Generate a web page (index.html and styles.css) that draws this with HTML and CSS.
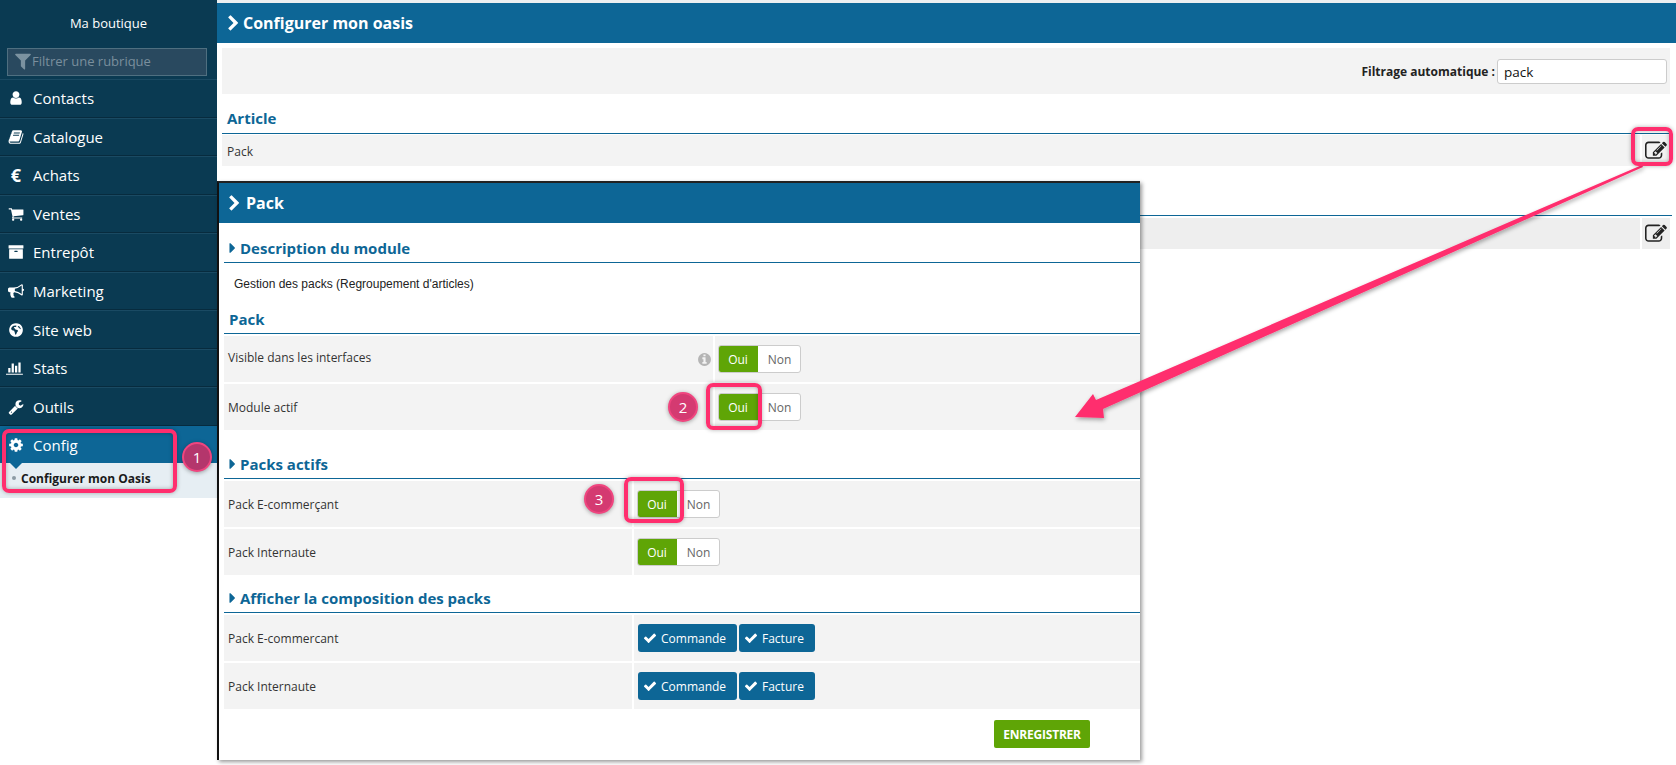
FILE: index.html
```html
<!DOCTYPE html>
<html lang="fr">
<head>
<meta charset="utf-8">
<title>Configurer mon oasis</title>
<link rel="stylesheet" href="styles.css">
</head>
<body>
<svg class="defs" width="0" height="0" aria-hidden="true">
  <symbol id="i-user" viewBox="0 0 1792 1792"><path d="M1536 1399q0 109-62.5 187t-150.5 78h-854q-88 0-150.5-78t-62.5-187q0-85 8.5-160.5t31.5-152 58.5-131 94-89 134.5-34.5q131 128 313 128t313-128q76 0 134.5 34.5t94 89 58.5 131 31.5 152 8.5 160.5zm-256-887q0 159-112.5 271.5t-271.5 112.5-271.5-112.5-112.5-271.5 112.5-271.5 271.5-112.5 271.5 112.5 112.5 271.5z"/></symbol>
  <symbol id="i-cog" viewBox="0 0 1792 1792"><path d="M1152 896q0-106-75-181t-181-75-181 75-75 181 75 181 181 75 181-75 75-181zm512-109v222q0 12-8 23t-20 13l-185 28q-19 54-39 91 35 50 107 138 10 12 10 25t-9 23q-27 37-99 108t-94 71q-12 0-26-9l-138-108q-44 23-91 38-16 136-29 186-7 28-36 28h-222q-14 0-24.5-8.5t-11.5-21.5l-28-184q-49-16-90-37l-141 107q-10 9-25 9-14 0-25-11-126-114-165-168-7-10-7-23 0-12 8-23 15-21 51-66.5t54-70.5q-27-50-41-99l-183-27q-13-2-21-12.5t-8-23.5v-222q0-12 8-23t19-13l186-28q14-46 39-92-40-57-107-138-10-12-10-24 0-10 9-23 26-36 98.5-107.5t94.5-71.5q13 0 26 10l138 107q44-23 91-38 16-136 29-186 7-28 36-28h222q14 0 24.5 8.5t11.5 21.5l28 184q49 16 90 37l142-107q9-9 24-9 13 0 25 10 129 119 165 170 7 8 7 22 0 12-8 23-15 21-51 66.5t-54 70.5q26 50 41 98l183 28q13 2 21 12.5t8 23.5z"/></symbol>
  <symbol id="i-check" viewBox="0 0 1792 1792"><path d="M1671 566q0 40-28 68l-724 724-136 136q-28 28-68 28t-68-28l-136-136-362-362q-28-28-28-68t28-68l136-136q28-28 68-28t68 28l294 295 656-657q28-28 68-28t68 28l136 136q28 28 28 68z"/></symbol>
  <symbol id="i-cart" viewBox="0 0 1792 1792"><path d="M704 1536q0 52-38 90t-90 38-90-38-38-90 38-90 90-38 90 38 38 90zm896 0q0 52-38 90t-90 38-90-38-38-90 38-90 90-38 90 38 38 90zm128-1088v512q0 24-16.5 42.5t-40.5 21.5l-1044 122q13 60 13 70 0 16-24 64h920q26 0 45 19t19 45-19 45-45 19h-1024q-26 0-45-19t-19-45q0-11 8-31.5t16-36 21.5-40 15.5-29.5l-177-823h-204q-26 0-45-19t-19-45 19-45 45-19h256q16 0 28.5 6.5t19.5 15.5 13 24.5 8 26 5.5 29.5 4.5 26h1201q26 0 45 19t19 45z"/></symbol>
  <symbol id="i-archive" viewBox="0 0 1792 1792"><path d="M1088 832q0-26-19-45t-45-19h-256q-26 0-45 19t-19 45 19 45 45 19h256q26 0 45-19t19-45zm576-192v960q0 26-19 45t-45 19h-1408q-26 0-45-19t-19-45v-960q0-26 19-45t45-19h1408q26 0 45 19t19 45zm64-448v256q0 26-19 45t-45 19h-1536q-26 0-45-19t-19-45v-256q0-26 19-45t45-19h1536q26 0 45 19t19 45z"/></symbol>
  <symbol id="i-filter" viewBox="0 0 1792 1792"><path d="M1595 295q17 41-14 70l-493 493v742q0 42-39 59-13 5-25 5-27 0-45-19l-256-256q-19-19-19-45v-486l-493-493q-31-29-14-70 17-39 59-39h1280q42 0 59 39z"/></symbol>
  <symbol id="i-horn" viewBox="0 0 1792 1792"><path d="M1664 640q53 0 90.5 37.5t37.5 90.5-37.5 90.5-90.5 37.5v384q0 52-38 90t-90 38q-417-347-812-380-58 19-91 66t-31 100.5 40 92.5q-20 33-23 65.5t6 58 33.5 55 48 50 61.5 50.5q-29 58-111.5 83t-168.5 11.5-132-55.5q-7-23-29.5-87.5t-32-94.5-23-89-15-101 3.5-98.5 22-110.5h-122q-66 0-113-47t-47-113v-192q0-66 47-113t113-47h480q435 0 896-384 52 0 90 38t38 90v384zm-128 604v-954q-394 302-768 343v270q377 42 768 341z"/></symbol>
  <symbol id="i-chart" viewBox="0 0 2048 1792"><path d="M512 896v512h-256v-512h256zm384-512v1024h-256v-1024h256zm1024 1152v128h-2048v-1280h128v1152h1920zm-640-896v768h-256v-768h256zm384-384v1152h-256v-1152h256z"/></symbol>
  <symbol id="i-wrench" viewBox="0 0 1792 1792"><path d="M448 1472q0-26-19-45t-45-19-45 19-19 45 19 45 45 19 45-19 19-45zm644-420l-682 682q-37 37-90 37-52 0-91-37l-106-108q-38-36-38-90 0-53 38-91l681-681q39 98 114.5 173.5t173.5 114.5zm634-435q0 39-23 106-47 134-164.5 217.5t-258.5 83.5q-185 0-316.5-131.5t-131.5-316.5 131.5-316.5 316.5-131.5q58 0 121.5 16.5t107.5 46.5q16 11 16 28t-16 28l-293 169v224l193 107q5-3 79-48.5t135.5-81 70.5-35.5q15 0 23.5 10t8.5 25z"/></symbol>
  <symbol id="i-info" viewBox="0 0 1792 1792"><path d="M1152 1376v-160q0-14-9-23t-23-9h-96v-512q0-14-9-23t-23-9h-320q-14 0-23 9t-9 23v160q0 14 9 23t23 9h96v320h-96q-14 0-23 9t-9 23v160q0 14 9 23t23 9h448q14 0 23-9t9-23zm-128-896v-160q0-14-9-23t-23-9h-192q-14 0-23 9t-9 23v160q0 14 9 23t23 9h192q14 0 23-9t9-23zm640 416q0 209-103 385.5t-279.5 279.5-385.5 103-385.5-103-279.5-279.5-103-385.5 103-385.5 279.5-279.5 385.5-103 385.5 103 279.5 279.5 103 385.5z"/></symbol>
  <symbol id="i-edit" viewBox="0 0 1792 1792"><path d="M888 1184l116-116-152-152-116 116v56h96v96h56zm440-720q-16-16-33 1l-350 350q-17 17-1 33t33-1l350-350q17-17 1-33zm80 594v190q0 119-84.5 203.5t-203.5 84.5h-832q-119 0-203.5-84.5t-84.5-203.5v-832q0-119 84.5-203.5t203.5-84.5h832q63 0 117 25 15 7 18 23 3 17-9 29l-49 49q-14 14-32 8-23-6-45-6h-832q-66 0-113 47t-47 113v832q0 66 47 113t113 47h832q66 0 113-47t47-113v-126q0-13 9-22l64-64q15-15 35-8t20 29zm-96-738l288 288-672 672h-288v-288zm444 132l-92 92-288-288 92-92q28-28 68-28t68 28l152 152q28 28 28 68t-28 68z"/></symbol>
  <symbol id="i-book" viewBox="0 0 1792 1792"><path d="M1703 478q40 57 18 129l-275 906q-19 64-76.5 107.5t-122.5 43.5h-923q-77 0-148.5-53.5t-99.5-131.5q-24-67-2-127 0-4 3-27t4-37q1-8-3-21.5t-3-19.5q2-11 8-21t16.5-23.5 16.5-23.5q23-38 45-91.5t30-91.5q3-10 .5-30t-.5-28q3-11 17-28t17-23q21-36 42-92t25-90q1-9-2.5-32t.5-28q4-13 22-30.5t22-22.5q19-26 42.5-84.5t27.5-96.5q1-8-3-25.5t-2-26.5q2-8 9-18t18-23 17-21q8-12 16.5-30.5t15-35 16-36 19.5-32 26.5-23.5 36-11.5 47.5 5.5l-1 3q38-9 51-9h761q74 0 114 56t18 130l-274 906q-36 119-71.5 153.5t-128.5 34.5h-869q-27 0-38 15-11 16-1 43 24 70 144 70h923q29 0 56-15.5t35-41.5l300-987q7-22 5-57 38 15 59 43zm-1064 2q-4 13 2 22.5t20 9.5h608q13 0 25.5-9.5t16.5-22.5l21-64q4-13-2-22.5t-20-9.5h-608q-13 0-25.5 9.5t-16.5 22.5zm-83 256q-4 13 2 22.5t20 9.5h608q13 0 25.5-9.5t16.5-22.5l21-64q4-13-2-22.5t-20-9.5h-608q-13 0-25.5 9.5t-16.5 22.5z"/></symbol>
  <symbol id="i-globe" viewBox="0 0 1792 1792"><path fill-rule="evenodd" d="M896 128q209 0 385.5 103t279.5 279.5 103 385.5-103 385.5-279.5 279.5-385.5 103-385.5-103-279.5-279.5-103-385.5 103-385.5 279.5-279.5 385.5-103zM620 420l-190 150-90 220 130 130 210 60 70 180 60 260 110-60 90-210 120-130-70-130-230-60-80-120-110-10 60-130 170-20 90-100-60-60zM1180 440l-90 70 30 90 130 30 60 130 130 60-30-130-110-170z"/></symbol>
  <symbol id="i-chevron" viewBox="0 0 1792 1792"><path d="M1363 877l-742 742q-19 19-45 19t-45-19l-166-166q-19-19-19-45t19-45l531-531-531-531q-19-19-19-45t19-45l166-166q19-19 45-19t45 19l742 742q19 19 19 45t-19 45z"/></symbol>
  <symbol id="i-caret" viewBox="0 0 1792 1792"><path d="M1152 896q0 26-19 45l-448 448q-19 19-45 19t-45-19-19-45v-896q0-26 19-45t45-19 45 19l448 448q19 19 19 45z"/></symbol>
</svg>

<div class="app">
  <aside class="sidebar">
    <div class="shop">Ma boutique</div>
    <div class="search">
      <svg class="search-icon"><use href="#i-filter"/></svg>
      <span class="search-text">Filtrer une rubrique</span>
    </div>
    <nav class="menu">
      <div class="item"><svg class="ico"><use href="#i-user"/></svg><span>Contacts</span></div>
      <div class="item"><svg class="ico"><use href="#i-book"/></svg><span>Catalogue</span></div>
      <div class="item"><span class="ico euro">€</span><span>Achats</span></div>
      <div class="item"><svg class="ico"><use href="#i-cart"/></svg><span>Ventes</span></div>
      <div class="item"><svg class="ico"><use href="#i-archive"/></svg><span>Entrepôt</span></div>
      <div class="item"><svg class="ico"><use href="#i-horn"/></svg><span>Marketing</span></div>
      <div class="item"><svg class="ico"><use href="#i-globe"/></svg><span>Site web</span></div>
      <div class="item"><svg class="ico wide-ico"><use href="#i-chart"/></svg><span>Stats</span></div>
      <div class="item"><svg class="ico"><use href="#i-wrench"/></svg><span>Outils</span></div>
      <div class="item active"><svg class="ico"><use href="#i-cog"/></svg><span>Config</span></div>
    </nav>
    <div class="submenu"><i class="bullet"></i><span>Configurer mon Oasis</span></div>
  </aside>

  <main class="main">
    <header class="bar"><svg class="chev"><use href="#i-chevron"/></svg><span>Configurer mon oasis</span></header>
    <div class="filter">
      <label class="filter-label">Filtrage automatique :</label>
      <div class="filter-input">pack</div>
    </div>
    <h2 class="section">Article</h2>
    <div class="row-main">
      <div class="cell grow">Pack</div>
      <div class="cell edit"><svg class="edit-ico"><use href="#i-edit"/></svg></div>
    </div>
    <h2 class="section second">&nbsp;</h2>
    <div class="row-main alt">
      <div class="cell grow">&nbsp;</div>
      <div class="cell edit"><svg class="edit-ico"><use href="#i-edit"/></svg></div>
    </div>
  </main>
</div>

<section class="modal">
  <header class="bar modal-bar"><svg class="chev"><use href="#i-chevron"/></svg><span>Pack</span></header>
  <div class="modal-body">
    <h3 class="mh first"><svg class="caret"><use href="#i-caret"/></svg>Description du module</h3>
    <p class="desc">Gestion des packs (Regroupement d'articles)</p>
    <h3 class="mh plain">Pack</h3>
    <div class="rows wide">
      <div class="lab up"><span>Visible dans les interfaces</span><svg class="info"><use href="#i-info"/></svg></div>
      <div class="val"><div class="toggle"><b>Oui</b><em>Non</em></div></div>
      <div class="lab"><span>Module actif</span></div>
      <div class="val"><div class="toggle"><b>Oui</b><em>Non</em></div></div>
    </div>
    <h3 class="mh packs"><svg class="caret"><use href="#i-caret"/></svg>Packs actifs</h3>
    <div class="rows">
      <div class="lab"><span>Pack E-commerçant</span></div>
      <div class="val"><div class="toggle"><b>Oui</b><em>Non</em></div></div>
      <div class="lab"><span>Pack Internaute</span></div>
      <div class="val"><div class="toggle"><b>Oui</b><em>Non</em></div></div>
    </div>
    <h3 class="mh comp"><svg class="caret"><use href="#i-caret"/></svg>Afficher la composition des packs</h3>
    <div class="rows">
      <div class="lab"><span>Pack E-commercant</span></div>
      <div class="val btns"><span class="btn cmd"><svg class="tick"><use href="#i-check"/></svg>Commande</span><span class="btn fac"><svg class="tick"><use href="#i-check"/></svg>Facture</span></div>
      <div class="lab"><span>Pack Internaute</span></div>
      <div class="val btns"><span class="btn cmd"><svg class="tick"><use href="#i-check"/></svg>Commande</span><span class="btn fac"><svg class="tick"><use href="#i-check"/></svg>Facture</span></div>
    </div>
    <div class="actions"><span class="save">ENREGISTRER</span></div>
  </div>
</section>

<svg class="arrow" viewBox="0 0 1676 765">
  <defs>
    <filter id="soft" x="-5%" y="-5%" width="110%" height="115%"><feDropShadow dx="1" dy="2" stdDeviation="2" flood-color="#000" flood-opacity=".35"/></filter>
  </defs>
  <polygon class="arrow-fill" filter="url(#soft)" points="1642,165 1643,167 1103,409 1104,418 1075,417 1093,394 1096,400"/>
</svg>

<div class="mark m-side"></div>
<div class="mark m-edit"></div>
<div class="mark m-oui1"></div>
<div class="mark m-oui2"></div>
<div class="badge b1">1</div>
<div class="badge b2">2</div>
<div class="badge b3">3</div>
</body>
</html>
```

FILE: styles.css
```css
* { box-sizing: border-box; }
html, body { margin: 0; padding: 0; height: 765px; overflow: hidden; background: #fff; }
body { position: relative; font-family: "Open Sans", sans-serif; font-size: 12px; color: #333; }
.defs { position: absolute; }
svg { fill: currentColor; display: block; }

.app { display: flex; align-items: flex-start; width: 1676px; }
.sidebar { width: 217px; flex: none; background: #e6eef3; color: #fff; }
.shop { height: 48px; background: #0a3a52; font-size: 13px; text-align: center; line-height: 46px; }
.search { height: 31px; background: #0a3a52; padding: 0 10px 5px 7px; display: block; position: relative; }
.search::before { content: ""; position: absolute; left: 7px; right: 10px; top: 0; height: 26px; background: #29495f; border: 1px solid #4f6f80; }
.search-icon { position: absolute; left: 13px; top: 3px; width: 20px; height: 20px; color: #7b92a0; }
.search-text { position: absolute; left: 32px; top: 0; line-height: 26px; font-size: 13px; color: #7a8f9d; }
.menu { display: flex; flex-direction: column; background: #0a3a52; }
.item { height: 38.55px; display: flex; align-items: center; padding-left: 8px; font-size: 15px; color: #fff; border-top: 1px solid #1a4a63; border-bottom: 1px solid #072b3e; }
.item .ico { width: 16px; height: 16px; margin-right: 9px; flex: none; }
.item .wide-ico { width: 18px; margin-left: -2px; }
.euro { font-weight: 700; font-size: 18px; line-height: 16px; text-align: center; }
.item.active { background: #0d6696; border: 0; position: relative; height: 37px; padding-top: 2px; }
.item.active::after { content: ""; position: absolute; left: 10px; bottom: -6px; border: 6px solid transparent; border-top-color: #0d6696; border-bottom: 0; }
.submenu { height: 35px; display: flex; align-items: center; padding: 0 0 4px 12px; font-size: 12px; font-weight: 700; color: #1a1a1a; }
.bullet { width: 4px; height: 4px; border-radius: 50%; background: #8d9ba4; margin-right: 5px; }

.main { flex: 1; padding-top: 3px; background: #fff; min-height: 765px; position: relative; }
.main::before { content: ""; position: absolute; left: 0; right: 0; top: 0; height: 3px; background: #eceff1; }
.bar { height: 40px; background: #0d6696; color: #fff; display: flex; align-items: center; padding-left: 8px; font-size: 16px; font-weight: 700; }
.chev { width: 17px; height: 17px; margin-right: 1px; }
.filter { height: 46px; margin: 5px 6px 0 5px; background: #f3f3f3; display: flex; justify-content: flex-end; align-items: center; padding-right: 3px; font-weight: 700; }
.filter-label { margin-right: 2px; color: #222; font-size: 12px; }
.filter-input { width: 170px; height: 25px; background: #fff; border: 1px solid #ccc; border-radius: 3px; padding-left: 6px; font-size: 13.5px; font-weight: 400; line-height: 25px; color: #111; }
.section { margin: 13px 4px 0 5px; padding-left: 5px; height: 27px; font-size: 15px; line-height: 22px; font-weight: 700; color: #0d6696; border-bottom: 1px solid #0d6696; }
.section.second { margin-top: 24px; height: 26px; }
.row-main { margin: 1px 6px 0 5px; height: 31px; display: flex; gap: 2px; }
.row-main.alt { margin-top: 2px; }
.cell { background: #f3f3f3; display: flex; align-items: center; }
.row-main.alt .cell { background: #eee; }
.grow { flex: 1; padding: 2px 0 0 5px; }
.edit { width: 28px; justify-content: center; }
.edit-ico { width: 22px; height: 22px; color: #222; }

.modal { position: absolute; left: 217px; top: 181px; width: 923px; height: 579px; background: #fff; border-top: 2px solid #222; border-left: 2px solid #111; box-shadow: 2px 2px 4px rgba(0,0,0,.4); }
.modal-bar { height: 40px; padding-left: 7px; }
.modal-bar .chev { margin-right: 3px; }
.modal-body { padding: 0 0 0 5px; }
.mh { margin: 0; height: 24px; font-size: 15px; line-height: 18px; font-weight: 700; color: #0d6696; border-bottom: 1px solid #0d6696; padding-left: 3px; display: flex; align-items: flex-start; }
.mh.first { margin-top: 16px; }
.mh.plain { margin-top: 6px; padding-left: 5px; }
.mh.packs { margin-top: 25px; }
.mh.comp { margin-top: 14px; }
.caret { width: 17px; height: 18px; margin: 0 -1px 0 -3px; flex: none; }
.desc { margin: 0; height: 41px; padding-left: 10px; font-family: "Liberation Sans", sans-serif; font-size: 12px; line-height: 42px; color: #222; }
.rows { display: grid; grid-template-columns: 408px 1fr; grid-auto-rows: 46px; gap: 2px; margin-top: 2px; }
.rows.wide { grid-template-columns: 489px 1fr; }
.lab { background: #f3f3f3; display: flex; align-items: center; justify-content: space-between; padding-left: 4px; color: #333; }
.lab.up span { margin-bottom: 3px; }
.val { background: #f3f3f3; display: flex; align-items: center; padding-left: 3px; gap: 2px; }
.val.btns { padding-left: 4px; }
.info { width: 15px; height: 15px; color: #b5b5b5; margin-right: 1px; }
.toggle { display: flex; height: 28px; width: 83px; border-radius: 3px; overflow: hidden; border: 1px solid #ccc; background: #fff; }
.toggle b { width: 40px; margin: -1px 0 -1px -1px; background: #5fa506; color: #fff; font-weight: 400; display: flex; align-items: center; justify-content: center; }
.toggle em { flex: 1; font-style: normal; color: #666; display: flex; align-items: center; justify-content: center; padding-left: 1px; }
.btn { height: 28px; background: #0d6696; color: #fff; border-radius: 3px; display: flex; align-items: center; padding-left: 5px; }
.cmd { width: 99px; }
.fac { width: 76px; }
.tick { width: 14px; height: 14px; margin-right: 4px; }
.actions { display: flex; justify-content: flex-end; padding: 11px 50px 0 0; }
.save { width: 96px; height: 28px; background: #5fa506; color: #fff; border-radius: 2px; font-weight: 700; font-size: 12px; letter-spacing: -.2px; display: flex; align-items: center; justify-content: center; }

.arrow { position: absolute; left: 0; top: 0; width: 1676px; height: 765px; pointer-events: none; }
.arrow-fill { fill: #ff2e6e; }
.mark { position: absolute; border: 4px solid #ff2e6e; border-radius: 7px; box-shadow: 0 0 4px rgba(0,0,0,.3), inset 0 0 4px rgba(0,0,0,.3); }
.m-side { left: 2px; top: 429px; width: 175px; height: 64px; }
.m-edit { left: 1631px; top: 127px; width: 42px; height: 39px; }
.m-oui1 { left: 706px; top: 383px; width: 56px; height: 47px; }
.m-oui2 { left: 624px; top: 477px; width: 60px; height: 46px; }
.badge { position: absolute; width: 30px; height: 30px; border-radius: 50%; background: #d43a71; border: 2px solid #f0457f; color: #fff; font-size: 15px; text-align: center; line-height: 26px; box-shadow: 0 1px 4px rgba(0,0,0,.35); }
.b1 { left: 182px; top: 442px; background: #b4366c; }
.b2 { left: 668px; top: 392px; }
.b3 { left: 584px; top: 484px; }
```
